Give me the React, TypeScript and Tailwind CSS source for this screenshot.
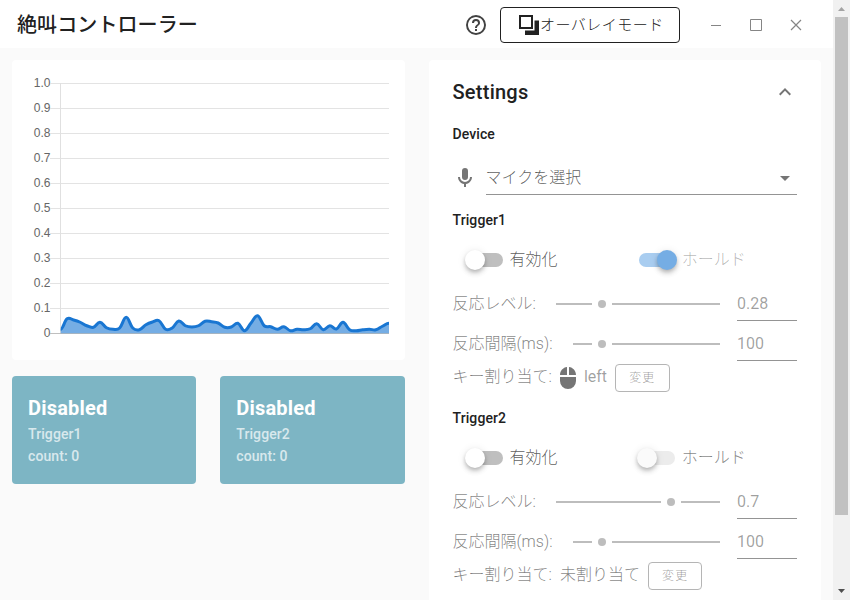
import { useState } from "react";
import clsx from "clsx";

// microphone level history, 0 - 1
const levels = [
  0.017, 0.059, 0.054, 0.045, 0.031, 0.025, 0.045, 0.023, 0.017, 0.022, 0.065,
  0.022, 0.015, 0.035, 0.046, 0.051, 0.017, 0.022, 0.05, 0.031, 0.026, 0.031,
  0.049, 0.047, 0.042, 0.025, 0.026, 0.041, 0.011, 0.042, 0.071, 0.031, 0.027,
  0.017, 0.027, 0.011, 0.017, 0.015, 0.019, 0.039, 0.015, 0.031, 0.018, 0.045,
  0.015, 0.011, 0.015, 0.017, 0.015, 0.029, 0.041,
];

const ticks = ["1.0", "0.9", "0.8", "0.7", "0.6", "0.5", "0.4", "0.3", "0.2", "0.1", "0"];

const icons = {
  help: "M11,18H13V16H11V18M12,2A10,10 0 0,0 2,12A10,10 0 0,0 12,22A10,10 0 0,0 22,12A10,10 0 0,0 12,2M12,20C7.59,20 4,16.41 4,12C4,7.59 7.59,4 12,4C16.41,4 20,7.59 20,12C20,16.41 16.41,20 12,20M12,6A4,4 0 0,0 8,10H10A2,2 0 0,1 12,8A2,2 0 0,1 14,10C14,12 11,11.75 11,15H13C13,12.75 16,12.5 16,10A4,4 0 0,0 12,6Z",
  mic: "M12,2A3,3 0 0,1 15,5V11A3,3 0 0,1 12,14A3,3 0 0,1 9,11V5A3,3 0 0,1 12,2M19,11C19,14.53 16.39,17.44 13,17.93V21H11V17.93C7.61,17.44 5,14.53 5,11H7A5,5 0 0,0 12,16A5,5 0 0,0 17,11H19Z",
  mouse: "M11,1.07C7.05,1.56 4,4.92 4,9H11M4,15A8,8 0 0,0 12,23A8,8 0 0,0 20,15V11H4M13,1.07V9H20C20,4.92 16.95,1.56 13,1.07Z",
  up: "M7.41,15.41L12,10.83L16.59,15.41L18,14L12,8L6,14L7.41,15.41Z",
  down: "M7,10L12,15L17,10H7Z",
};

function Icon({ name, className }: { name: keyof typeof icons; className?: string }) {
  return (
    <svg viewBox="0 0 24 24" className={clsx("size-6 shrink-0", className)} fill="currentColor">
      <path d={icons[name]} />
    </svg>
  );
}

function LevelChart() {
  const left = 48.5;
  const right = 377;
  const bottom = 273.5;
  const step = (right - left) / (levels.length - 1);
  const pts = levels.map((v, i) => [left + i * step, bottom - v * 250]);
  let line = `M${pts[0][0]},${pts[0][1]}`;
  for (let i = 1; i < pts.length; i++) {
    const [x0, y0] = pts[i - 1];
    const [x1, y1] = pts[i];
    // slope at each end comes from the neighbours
    const s0 = i > 1 ? (y1 - pts[i - 2][1]) * 0.2 : 0;
    const s1 = i < pts.length - 1 ? (pts[i + 1][1] - y0) * 0.2 : 0;
    line += `C${x0 + step * 0.4},${y0 + s0} ${x1 - step * 0.4},${y1 - s1} ${x1},${y1}`;
  }

  return (
    <svg width="392" height="300" viewBox="0 0 392 300" className="block">
      <defs>
        <clipPath id="area">
          <rect x={left} y="0" width={right - left} height={bottom} />
        </clipPath>
      </defs>
      {ticks.map((t, i) => (
        <g key={t}>
          <text x="38.5" y={27 + i * 25} textAnchor="end" className="fill-[#666] font-['Liberation_Sans'] text-[12px]">
            {t}
          </text>
          <path d={`M38,${23.5 + i * 25}H377`} stroke={t === "0" ? "#bfbfbf" : "#e3e3e3"} />
        </g>
      ))}
      <path d="M48.5,23V273" stroke="#e0e0e0" />
      <g clipPath="url(#area)">
        <path d={`${line}V${bottom}H${left}Z`} fill="#1976d2" fillOpacity="0.6" />
        <path d={line} fill="none" stroke="#1976d2" strokeWidth="3" />
      </g>
    </svg>
  );
}

function TriggerCard({ name }: { name: string }) {
  return (
    <div className="h-[108px] flex-1 rounded bg-[#7db5c4] px-4 pt-4 text-white">
      <div className="text-xl leading-8 font-bold tracking-[0.2px]">Disabled</div>
      <div className="-mt-px text-sm leading-[22px] font-medium tracking-[0.1px] opacity-70">
        <p>{name}</p>
        <p>count: 0</p>
      </div>
    </div>
  );
}

type SwitchProps = {
  label: string;
  on?: boolean;
  disabled?: boolean;
};

function Switch({ label, on: initial = false, disabled = false }: SwitchProps) {
  const [on, setOn] = useState(initial);
  return (
    <button
      disabled={disabled}
      onClick={() => setOn(!on)}
      className="flex flex-1 items-center gap-[7px] pl-[14px]"
    >
      <span
        className={clsx(
          "relative mt-[2px] h-[14px] w-9 rounded-full",
          on ? "bg-[#a9cdf0]" : disabled ? "bg-[#ececec]" : "bg-[#bfbfbf]"
        )}
      >
        <span
          className={clsx(
            "absolute -top-[3px] size-5 rounded-full shadow-[0_2px_4px_-1px_rgba(0,0,0,0.2),0_4px_5px_rgba(0,0,0,0.12),0_1px_8px_rgba(0,0,0,0.1)]",
            on ? "left-[18px] bg-[#75ade4]" : "-left-[2px]",
            !on && (disabled ? "bg-[#fafafa]" : "bg-white")
          )}
        />
      </span>
      <span className={clsx("mt-[2px] font-light", !disabled ? "text-black/65" : on ? "text-black/30" : "text-black/50")}>
        {label}
      </span>
    </button>
  );
}

type SliderRowProps = {
  label: string;
  ratio: number;
  value: string;
};

function SliderRow({ label, ratio, value }: SliderRowProps) {
  return (
    <div className="flex h-10 items-center">
      <span className="mt-[2px] shrink-0 font-light text-black/50">{label}</span>
      <div className="mt-[2px] mr-[17px] ml-5 flex flex-1 items-center">
        <div className="flex shrink-0 pr-[10px]" style={{ width: `${ratio * 100}%` }}>
          <span className="h-[2px] flex-1 bg-[#bdbdbd]" />
        </div>
        <span className="-mx-1 size-2 shrink-0 rounded-full bg-[#bdbdbd]" />
        <span className="ml-[10px] h-[2px] flex-1 bg-[#bdbdbd]" />
      </div>
      <div className="mt-[2px] flex h-[34px] w-[60px] items-center border-b border-[#949494] text-black/38">
        {value}
      </div>
    </div>
  );
}

function KeyRow({ mouse, keyName }: { mouse?: boolean; keyName: string }) {
  return (
    <div className="flex h-[30px] items-center font-light text-black/50">
      <span className="mr-1 -mt-[2px]">キー割り当て:</span>
      {mouse && <Icon name="mouse" className="text-[#757575]" />}
      <span className={clsx("-mt-[2px] mr-2", mouse ? "ml-1 font-normal text-black/38" : "ml-1")}>{keyName}</span>
      <button className="h-7 w-[54.5px] rounded border border-[#b5b5b5] text-xs tracking-[1.07px] text-black/40">
        変更
      </button>
    </div>
  );
}

function TriggerSettings({ name, hold, level, ratio, mouse, keyName }: {
  name: string;
  hold: boolean;
  level: string;
  ratio: number;
  mouse?: boolean;
  keyName: string;
}) {
  return (
    <section className="h-[198px]">
      <h3 className="text-sm leading-[22px] font-medium tracking-[0.1px]">{name}</h3>
      <div className="flex h-[52px] pt-1">
        <Switch label="有効化" />
        <Switch label="ホールド" on={hold} disabled />
      </div>
      <SliderRow label="反応レベル:" ratio={ratio} value={level} />
      <SliderRow label="反応間隔(ms):" ratio={0.2} value="100" />
      <KeyRow mouse={mouse} keyName={keyName} />
    </section>
  );
}

function Header() {
  return (
    <header className="flex h-12 items-center bg-white pl-[17px]">
      <h1 className="pt-[2px] text-xl font-medium tracking-[0.1px]">絶叫コントローラー</h1>
      <div className="ml-auto flex h-full items-center pt-[2px]">
        <Icon name="help" className="mr-3 text-[#424242]" />
        <button className="flex h-9 w-[180px] items-center rounded border border-[#212121] pl-[17px] text-[15px] font-light tracking-[0.5px] whitespace-nowrap">
          <svg width="22" height="22" viewBox="0 0 22 22" className="shrink-0">
            <path d="M2,2H14V14H2Z" fill="none" stroke="#212121" strokeWidth="2" />
            <path d="M16.5,6.5H21V21H7V16.5H16.5Z" fill="#212121" />
          </svg>
          オーバレイモード
        </button>
        <div className="mr-[31px] ml-[30px] flex gap-7 text-[#858585]">
          <svg width="12" height="12" stroke="currentColor">
            <path d="M1,6.5H11" />
          </svg>
          <svg width="12" height="12" stroke="currentColor" fill="none">
            <path d="M0.5,0.5H11.5V11.5H0.5Z" />
          </svg>
          <svg width="12" height="12" stroke="currentColor" strokeWidth="1.2">
            <path d="M1,1L11,11M11,1L1,11" />
          </svg>
        </div>
      </div>
    </header>
  );
}

function Scrollbar() {
  return (
    <div className="flex w-[17px] shrink-0 flex-col items-center bg-[#f1f1f1]">
      <svg width="17" height="17" className="shrink-0">
        <path d="M5,11L8.5,7L12,11Z" fill="#a3a3a3" />
      </svg>
      <div className="h-[498px] w-[13px] bg-[#c1c1c1]" />
      <svg width="17" height="17" className="mt-auto shrink-0">
        <path d="M5,6L8.5,10L12,6Z" fill="#505050" />
      </svg>
    </div>
  );
}

export default function App() {
  const [open, setOpen] = useState(true);

  return (
    <div className="flex h-[600px] w-[850px] overflow-hidden bg-[#fafafa] font-[Roboto,'Noto_Sans_CJK_JP',sans-serif] text-base text-[#212121]">
      <div className="min-w-0 flex-1">
        <Header />
        <main className="grid grid-cols-2 gap-6 p-3">
          <div>
            <div className="h-[300px] rounded bg-white">
              <LevelChart />
            </div>
            <div className="mt-4 flex gap-6">
              <TriggerCard name="Trigger1" />
              <TriggerCard name="Trigger2" />
            </div>
          </div>

          <div className="rounded bg-white px-6">
            <button onClick={() => setOpen(!open)} className="flex h-[63px] w-full items-center justify-between">
              <span className="text-xl font-medium tracking-[0.25px]">Settings</span>
              <Icon name="up" className="text-[#757575]" />
            </button>
            {open && (
              <>
                <h3 className="text-sm leading-[22px] font-medium tracking-[0.1px]">Device</h3>
                <div className="flex h-16 pt-4">
                  <Icon name="mic" className="mt-[5px] mr-[9px] text-[#757575]" />
                  <div className="flex h-[34px] flex-1 items-center justify-between border-b border-[#949494]">
                    <span className="font-light text-black/65">マイクを選択</span>
                    <Icon name="down" className="text-[#757575]" />
                  </div>
                </div>
                <TriggerSettings name="Trigger1" hold level="0.28" ratio={0.28} mouse keyName="left" />
                <TriggerSettings name="Trigger2" hold={false} level="0.7" ratio={0.7} keyName="未割り当て" />
              </>
            )}
          </div>
        </main>
      </div>
      <Scrollbar />
    </div>
  );
}
